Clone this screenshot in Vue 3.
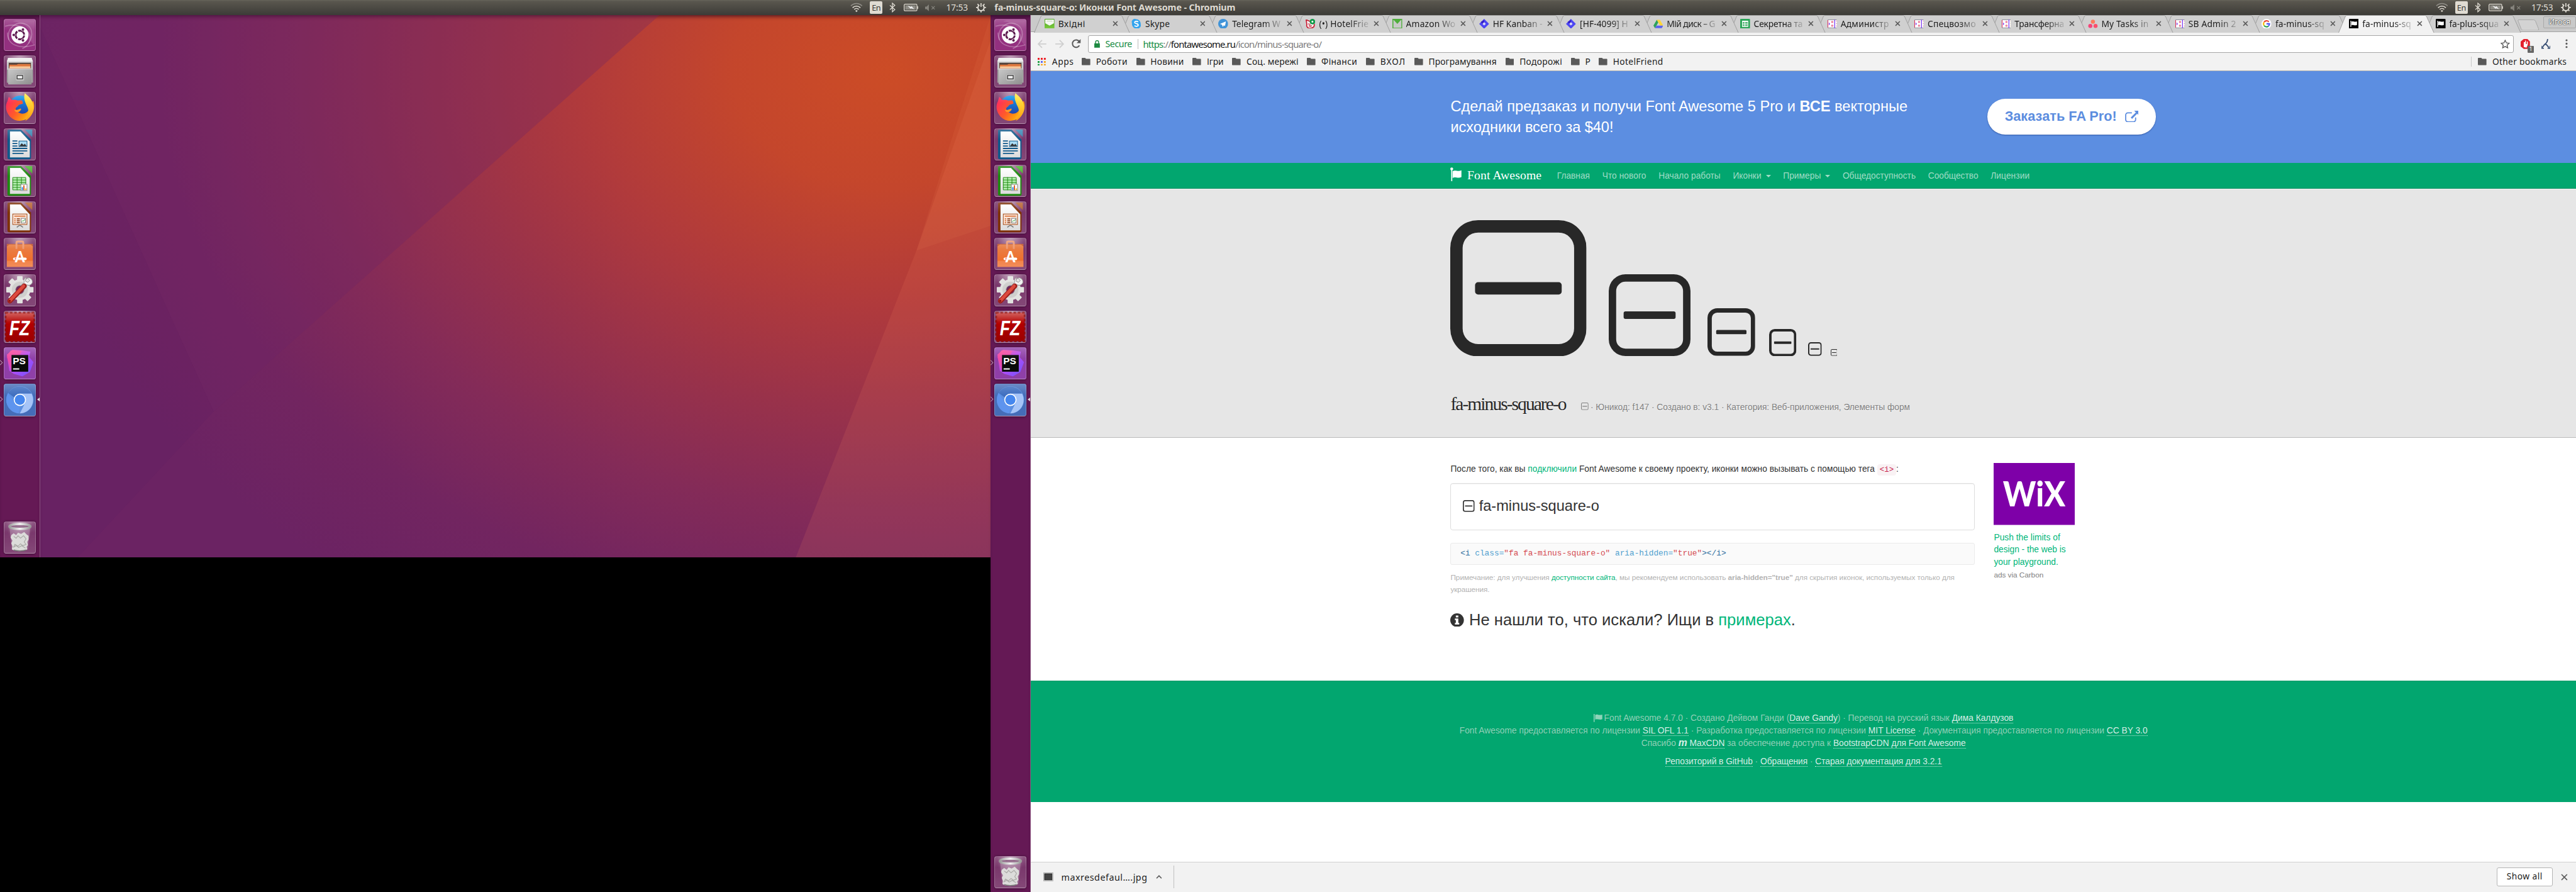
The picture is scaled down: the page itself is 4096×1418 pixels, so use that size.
<script setup>
const fitOne = (el, target) => {
  const root = el.closest('.desk')
  const k = root.getBoundingClientRect().width / 4160
  el.style.letterSpacing = '0px'
  const w = el.getBoundingClientRect().width / k
  const n = el.textContent.length
  el.style.letterSpacing = ((target - w) / n).toFixed(4) + 'px'
}
const vFit = { mounted: (el, b) => requestAnimationFrame(() => fitOne(el, b.value)) }

const launcher = ['ubuntu', 'files', 'firefox', 'writer', 'calc', 'impress', 'software', 'settings', 'filezilla', 'phpstorm', 'chromium']
const marksOn = { software: ['A', 18, 40, 25, 16], filezilla: ['FZ', 9, 40, 34, 33], phpstorm: ['PS', 14.5, 27.5, 15, 21] }
const monitors = [{ id: 'left' }, { id: 'right' }]
const tabs = [
  ['mail', 'Вхідні', 44], ['skype', 'Skype', 40], ['telegram', 'Telegram W', 78], ['hotel', '(•) HotelFrie', 80],
  ['amazon', 'Amazon Wo', 80], ['jira', 'HF Kanban -', 80], ['jira', '[HF-4099] H', 78], ['drive', 'Мій диск – G', 78],
  ['sheets', 'Секретна та', 79], ['hf', 'Администр', 78], ['hf', 'Спецвозмо', 78], ['hf', 'Трансферна', 80],
  ['asana', 'My Tasks in', 76], ['hf', 'SB Admin 2', 77], ['google', 'fa-minus-sq', 79], ['flagbox', 'fa-minus-sq', 79], ['flagbox', 'fa-plus-squa', 80],
]
const bookmarks = [
  ['Роботи', 51], ['Новини', 54], ['Ігри', 27], ['Соц. мережі', 84], ['Фінанси', 58], ['ВХОЛ', 41],
  ['Програмування', 110], ['Подорожі', 69], ['P', 8], ['HotelFriend', 81],
]
const sizes = [[220, 36], [132, 27.3], [77, 22.5], [44, 19.2], [22, 13.7], [11, 0]]
const nav = [['Главная', 53], ['Что нового', 71], ['Начало работы', 100], ['Иконки', 46, 1], ['Примеры', 61, 1], ['Общедоступность', 118], ['Сообщество', 81], ['Лицензии', 63]]
const petals = [0, 45, 90, 135, 180, 225, 270, 315]
</script>

<template>
  <div class="desk">
    <svg class="defs" width="0" height="0">
      <defs>
        <linearGradient id="gFx" x1="0" y1="0.2" x2="1" y2="0.8"><stop offset="0" stop-color="#ff2a5f" /><stop offset=".45" stop-color="#ff5a2a" /><stop offset=".75" stop-color="#ff9a10" /><stop offset="1" stop-color="#ffd83a" /></linearGradient>
        <linearGradient id="gFx2" x1="0" y1="0" x2="0" y2="1"><stop offset="0" stop-color="#fff24a" /><stop offset="1" stop-color="#ff9a10" /></linearGradient>
        <linearGradient id="gGlobe" x1="0" y1="0" x2="0" y2="1"><stop offset="0" stop-color="#14a0f0" /><stop offset="1" stop-color="#25289a" /></linearGradient>
        <linearGradient id="gCab" x1="0" y1="0" x2="1" y2="1"><stop offset="0" stop-color="#c9c9c9" /><stop offset="1" stop-color="#8f8f8f" /></linearGradient>
        <linearGradient id="gPage" x1="0" y1="0" x2="0" y2="1"><stop offset="0" stop-color="#fff" /><stop offset="1" stop-color="#dcdcdc" /></linearGradient>
        <linearGradient id="gBag" x1="0" y1="0" x2="0" y2="1"><stop offset="0" stop-color="#e9824a" /><stop offset=".7" stop-color="#ee6f2d" /><stop offset="1" stop-color="#f08a55" /></linearGradient>
        <linearGradient id="gFz" x1="0" y1="0" x2="0" y2="1"><stop offset="0" stop-color="#c9403c" /><stop offset=".4" stop-color="#b30000" /><stop offset="1" stop-color="#9a0000" /></linearGradient>
        <linearGradient id="gPs" x1="0" y1="0" x2="1" y2="1"><stop offset="0" stop-color="#ff4590" /><stop offset=".5" stop-color="#b44cf5" /><stop offset="1" stop-color="#6a55ff" /></linearGradient>
        <linearGradient id="gRim" x1="0" y1="0" x2="1" y2="0"><stop offset="0" stop-color="#8d8d8d" /><stop offset=".5" stop-color="#f3f3f3" /><stop offset="1" stop-color="#8d8d8d" /></linearGradient>
        <linearGradient id="gMail" x1="0" y1="0" x2="0" y2="1"><stop offset="0" stop-color="#4ca420" /><stop offset="1" stop-color="#7dcc3f" /></linearGradient>
      </defs>

      <symbol id="i-ubuntu" viewBox="0 0 52 52">
        <g fill="none" stroke="#fff" stroke-opacity=".28" stroke-width="1.6">
          <path d="M8 34C4 14 20 4 34 8c12 4 15 18 6 32" /><path d="M2 12c12-4 30-2 38 10 6 10 0 22-10 26" /><path d="M6 22c0 20 18 28 44 20" />
        </g>
        <path d="M14 4C34 6 46 16 42 34L50 44V2H20z" fill="#fff" opacity=".12" />
        <circle cx="26" cy="26" r="14" fill="#fff" />
        <circle cx="26" cy="26" r="7" fill="none" stroke="#5c1a4e" stroke-width="3" stroke-dasharray="13 1.66" stroke-dashoffset="-.8" />
        <g fill="#5c1a4e" stroke="#fff" stroke-width=".8"><circle cx="16.2" cy="26" r="2.5" /><circle cx="31" cy="17.3" r="2.5" /><circle cx="31" cy="34.7" r="2.5" /></g>
      </symbol>
      <symbol id="i-files" viewBox="0 0 52 52">
        <path d="M7 4h38l2 6v34H5V10z" fill="#c9c9c9" /><path d="M7 4h38l2 6H5z" fill="#ededed" />
        <path d="M8 12h36v12H8z" fill="#4a3830" /><path d="M9 15h12l2-1h20v10H9z" fill="#e0763a" /><path d="M9 18h34v2H9z" fill="#ffe2b8" />
        <path d="M5 23h2v21H5zM45 23h2v21h-2z" fill="#9b9b9b" />
        <rect x="7" y="21" width="38" height="26" rx="1" fill="url(#gCab)" /><path d="M8 21.6h36" stroke="#eee" />
        <rect x="19" y="30" width="14" height="11" rx="2" fill="#c6c6c6" stroke="#aaa" /><rect x="21.500" y="32.500" width="9" height="5.500" fill="#eee" stroke="#333" stroke-width="1.300" />
      </symbol>
      <symbol id="i-firefox" viewBox="0 0 52 52">
        <circle cx="27" cy="25" r="19" fill="url(#gGlobe)" />
        <path d="M8 8c2 1 3 3 4 5 4-1 9 0 11 1 3 0 6-1 7 1l1 4-7 2c-1 3-4 3-5 6 2 7 11 11 18 6 4-3 7-9 5-16l6-2c3 10 0 21-8 27-10 7-22 6-30-2C3 32 2 22 6 15z" fill="url(#gFx)" />
        <path d="M34 2c3 3 11 8 13.500 18 2 11-3 22-13 27 5-8 7-17 3-24-3-6-6-13-3.500-21z" fill="url(#gFx2)" />
        <path d="M17 29c3 1 6 0 10-2 2 0 1 3-2 5-4 2-7 0-8-3z" fill="#ff9a2a" />
      </symbol>
      <symbol id="i-writer" viewBox="0 0 52 52">
        <path d="M8 2h20l16 16v29a3 3 0 0 1-3 3H9a3 3 0 0 1-3-3V4a2 2 0 0 1 2-2z" fill="#10598b" /><path d="M34 2h12v12z" fill="#3a87b4" />
        <path d="M10 5h17l15 16v26H10z" fill="url(#gPage)" />
        <path d="M14 20.500h8M14 24.500h8M14 28.500h8M14 32.500h24M14 36.500h24M14 40.500h18" stroke="#10598b" stroke-width="1.800" />
        <rect x="24.500" y="20.500" width="13" height="9" fill="#a9dcf5" stroke="#10598b" /><path d="M25 29l4-5 3 3 2-2 3 4z" fill="#333" />
      </symbol>
      <symbol id="i-calc" viewBox="0 0 52 52">
        <path d="M8 2h20l16 16v29a3 3 0 0 1-3 3H9a3 3 0 0 1-3-3V4a2 2 0 0 1 2-2z" fill="#1e8a10" /><path d="M34 2h12v12z" fill="#47b52c" />
        <path d="M10 5h17l15 16v26H10z" fill="url(#gPage)" />
        <path d="M14.500 20.500h21v20h-21z" fill="#b7efb2" stroke="#1e8a10" /><path d="M14 24.500h22M14 28.500h22M14 32.500h22M14 36.500h22M21.500 20v21M28.500 20v21" stroke="#1e8a10" />
        <rect x="27.500" y="31.500" width="10" height="10" fill="#fff" stroke="#888" /><path d="M29 36h2v5h-2z" fill="#1e90ff" /><path d="M31.500 33h2v8h-2z" fill="#e0602a" /><path d="M34.500 38h2v3h-2z" fill="#f2c022" />
      </symbol>
      <symbol id="i-impress" viewBox="0 0 52 52">
        <path d="M8 2h20l16 16v29a3 3 0 0 1-3 3H9a3 3 0 0 1-3-3V4a2 2 0 0 1 2-2z" fill="#7e3108" /><path d="M34 2h12v12z" fill="#b7622f" />
        <path d="M10 5h17l15 16v26H10z" fill="url(#gPage)" />
        <rect x="14.500" y="20.500" width="23" height="17" fill="#fbe6da" stroke="#a4470f" /><path d="M17 24h18" stroke="#d8743a" stroke-width="2" />
        <path d="M17 28.500h2M17 31.500h2M17 34.500h2" stroke="#d8743a" stroke-width="2" /><path d="M21 28.500h5M21 31.500h5M21 34.500h5" stroke="#7e3108" stroke-width="1.600" />
        <rect x="28" y="27.500" width="7" height="7.500" fill="#fff" stroke="#777" /><path d="M29 33l2-2 1 1 2-3" stroke="#2a9a2a" fill="none" /><path d="M21 42l4-3h2l4 3" stroke="#777" fill="none" stroke-width="1.500" />
      </symbol>
      <symbol id="i-software" viewBox="0 0 52 52">
        <path d="M5 10h42v6H5z" fill="#c65a2c" /><path d="M5 14l4-3h34l4 3v33H5z" fill="url(#gBag)" /><path d="M5 37h42v10H5z" fill="#f4905c" opacity=".6" />
        <path d="M20.500 18V8a2 2 0 0 1 2-2h7a2 2 0 0 1 2 2v10" fill="none" stroke="#ef9a72" stroke-width="3" />
        <path d="M17 34h18" stroke="#fff" stroke-width="4" stroke-linecap="round" /><path d="M18 34h11" stroke="#e4572a" stroke-width="2" />
      </symbol>
      <symbol id="i-settings" viewBox="0 0 52 52">
        <g fill="#e2e2e0"><rect v-for="a in petals" :key="a" x="21.500" y="3" width="9" height="12" rx="1" :transform="`rotate(${a} 26 25)`" /></g>
        <circle cx="26" cy="25" r="17" fill="#e2e2e0" /><circle cx="26" cy="25" r="13" fill="#cfcfcd" /><circle cx="26" cy="25" r="7" fill="#6e2a5c" stroke="#aaa" />
        <path d="M38 6a6.500 6.500 0 0 1 8 8 6.500 6.500 0 0 1-9 3l-5 5-4-4 5-5a7 7 0 0 1 3-8l-1 6 4 2 3-3z" fill="#f1f1f1" stroke="#8a8a8a" />
        <path d="M10 43L33 19" stroke="#9c1f1b" stroke-width="8" stroke-linecap="round" /><path d="M10 42.500L32 19" stroke="#dd4a3e" stroke-width="5" stroke-linecap="round" /><circle cx="9.500" cy="43" r="1.800" fill="#8c1512" />
      </symbol>
      <symbol id="i-filezilla" viewBox="0 0 52 52">
        <rect x="3" y="3" width="46" height="46" fill="url(#gFz)" stroke="#8f0c0c" stroke-width="3" stroke-dasharray="4 3" />
      </symbol>
      <symbol id="i-phpstorm" viewBox="0 0 52 52">
        <rect width="52" height="52" rx="4" fill="#8f3fa8" /><path d="M5 12l9-8 16 1 13 2-2 9 7 8-6 16-12 7-14-4L9 38z" fill="url(#gPs)" /><path d="M5 16l6-11 18 1-10 20-6 14z" fill="#ff4e96" opacity=".6" />
        <rect x="12.500" y="12.500" width="27" height="27" fill="#0a0a0a" />
        <path d="M15 35h10" stroke="#fff" stroke-width="2" />
      </symbol>
      <symbol id="i-chromium" viewBox="0 0 52 52">
        <rect width="52" height="52" rx="4" fill="#456db8" />
        <circle cx="26" cy="26" r="22" fill="#5b8fe0" /><path d="M7 15A22 22 0 0 1 45 16H26a10 10 0 0 0-9 6z" fill="#3f6fc0" />
        <path d="M45 16H26l9 14-9 18A22 22 0 0 0 45 16z" fill="#a6c4f7" /><path d="M7 15l10 16 9 6-2 11A22 22 0 0 1 7 15z" fill="#5e94ee" />
        <circle cx="26" cy="26" r="10" fill="#fff" /><circle cx="26" cy="26" r="8.300" fill="#4587ee" />
      </symbol>
      <symbol id="i-trash" viewBox="0 0 52 52">
        <path d="M9 8l4 36c0 4 26 4 26 0l4-36z" fill="#d9c9d6" opacity=".3" />
        <path d="M12 22l4-3 4 3 3-4 5 2 5-3 4 4 3 2v6l-2 4 1 5-2 3 1 4c-6 4-20 4-25 0l1-5-2-5 2-4-3-5z" fill="#dcdcda" />
        <path d="M16 24l4 3 3-4 4 4 5-4 4 5-3 5 3 4-5 2-4-3-4 4-5-3-2 4M15 42l5-3 4 3 5-3 6 4" fill="none" stroke="#aaa9a6" stroke-width="1.200" />
        <ellipse cx="26" cy="8" rx="17" ry="4" fill="#6b3b62" fill-opacity=".5" stroke="url(#gRim)" stroke-width="3.500" />
        <path d="M16 46c5 2 15 2 20 0" stroke="#777" fill="none" stroke-width="1.500" />
      </symbol>

      <symbol id="t-mail" viewBox="0 0 16 16"><rect width="16" height="16" rx="1" fill="url(#gMail)" /><path d="M1 1h14v6L8 11 1 7z" fill="#f4f8f0" /><path d="M3.500 3.500h9" stroke="#bcd3b0" stroke-width="1" /></symbol>
      <symbol id="t-skype" viewBox="0 0 16 16"><path d="M5 0a5 5 0 0 0-4 7 7.500 7.500 0 0 0 9 8.500A5 5 0 0 0 15 9 7.500 7.500 0 0 0 7.500.6 5 5 0 0 0 5 0z" fill="#31a3ee" /><path d="M11 5C9.500 3.500 5 3.500 5.200 5.800 5.400 8 11 7.200 11 10c0 2.500-4.500 2.500-6 .8" fill="none" stroke="#fff" stroke-width="1.800" /></symbol>
      <symbol id="t-telegram" viewBox="0 0 16 16"><circle cx="8" cy="8" r="8" fill="#3f93d8" /><path d="M12.500 4L3 8l3 1.500L7.500 13 9 10.500l2 1z" fill="#fff" /></symbol>
      <symbol id="t-hotel" viewBox="0 0 16 16"><path d="M1 2c3 0 4 2 7 2s6 2 6 6-3 5-7 5-6-3-5-6z" fill="#fff" stroke="#c61f35" stroke-width="1.800" /><path d="M4 8l4 1M5 11c2 1 4 1 5 0" stroke="#c61f35" stroke-width="1.500" /><circle cx="11" cy="4.500" r="4.500" fill="#129a49" /><circle cx="11" cy="4.500" r="1.500" fill="#fff" /></symbol>
      <symbol id="t-amazon" viewBox="0 0 16 16"><rect x=".8" y=".8" width="14.400" height="14.400" fill="#c9c9c9" stroke="#4fae3c" stroke-width="1.600" /><path d="M1.500 1h13L8 8z" fill="#4fae3c" /></symbol>
      <symbol id="t-jira" viewBox="0 0 16 16"><path d="M8 0l8 8-8 8-8-8z" fill="#4d46f2" /><path d="M8 1.500v4L5.500 8l-3-3z" fill="#3420c8" /><path d="M8 5.300L10.700 8 8 10.700 5.300 8z" fill="#dcdcf5" /></symbol>
      <symbol id="t-drive" viewBox="0 0 16 16"><path d="M5.500 1.500L0 11l2.600 4L8 5.500z" fill="#2fa35c" /><path d="M5.500 1.500h5L16 11h-5z" fill="#ffd43a" /><path d="M5 11h11l-2.500 4h-11z" fill="#5a63f0" /></symbol>
      <symbol id="t-sheets" viewBox="0 0 16 16"><rect width="16" height="16" rx="1" fill="#2ba557" /><rect x="3" y="3" width="10" height="10" fill="#fff" /><path d="M4 5h3v1.500H4zM8 5h4v1.500H8zM4 7.500h3V9H4zM8 7.500h4V9H8zM4 10h3v1.500H4zM8 10h4v1.500H8z" fill="#2ba557" /></symbol>
      <symbol id="t-hf" viewBox="0 0 16 16"><path d="M16 1.500H1.500v13H16" fill="#fff" stroke="#8a8f99" /><path d="M1.500 2v12" stroke="#e0305a" /><path d="M3 5.500L5 8l-2 2.500z" fill="#7a3cf0" /><path d="M12.500 1v14" stroke="#7a3cf0" stroke-width="1.300" /><path d="M7.500 4h2v2h-2zM7.500 10h2v2h-2z" fill="none" stroke="#e0305a" stroke-width=".8" /><path d="M15.500 3v1M15.500 7v1M15.500 11v1" stroke="#e0305a" /></symbol>
      <symbol id="t-asana" viewBox="0 0 16 16"><circle cx="8" cy="4.500" r="3.300" fill="#fc7a5c" /><circle cx="3.800" cy="11.500" r="3.300" fill="#f5457a" /><circle cx="12.200" cy="11.500" r="3.300" fill="#fa4f6c" /></symbol>
      <symbol id="t-google" viewBox="0 0 16 16"><circle cx="8" cy="8" r="8" fill="#fff" /><path d="M11.700 4.800A4.800 4.800 0 0 0 4 5.400" stroke="#ea4335" fill="none" stroke-width="2.100" /><path d="M4 5.400a4.800 4.800 0 0 0 0 5.200" stroke="#fbbc05" fill="none" stroke-width="2.100" /><path d="M4 10.600a4.800 4.800 0 0 0 7 1.200" stroke="#34a853" fill="none" stroke-width="2.100" /><path d="M11 11.800A4.800 4.800 0 0 0 12.800 8H8" stroke="#4a55f5" fill="none" stroke-width="2.100" /></symbol>
      <symbol id="t-flagbox" viewBox="0 0 16 16"><rect width="16" height="16" rx="1.500" fill="#000" /><path d="M3 3v10" stroke="#fff" stroke-width="1.300" /><path d="M4 4.500c3-1.500 4 1 9-.5v6c-5 1.500-6-1-9 .5z" fill="#fff" /></symbol>
      <symbol id="fa-minus" viewBox="0 0 1408 1408"><path fill-rule="evenodd" d="M288 0H1120A288 288 0 0 1 1408 288V1120A288 288 0 0 1 1120 1408H288A288 288 0 0 1 0 1120V288A288 288 0 0 1 288 0zM288 128A160 160 0 0 0 128 288V1120A160 160 0 0 0 288 1280H1120A160 160 0 0 0 1280 1120V288A160 160 0 0 0 1120 128zM288 640H1120A32 32 0 0 1 1152 672V736A32 32 0 0 1 1120 768H288A32 32 0 0 1 256 736V672A32 32 0 0 1 288 640z" /></symbol>
      <symbol id="fa-flag" viewBox="0 0 20 24"><circle cx="2.500" cy="2.500" r="2.400" /><path d="M1.600 3h1.800v20.500H1.600z" /><path d="M4 6.500c5-3 8 1.500 15-1.500v11.500c-7 3-10-1.500-15 1.500z" /></symbol>
      <symbol id="folder" viewBox="0 0 14 12"><path d="M1 0h4.500L7 1.500h6a1 1 0 0 1 1 1V11a1 1 0 0 1-1 1H1a1 1 0 0 1-1-1V1a1 1 0 0 1 1-1z" fill="#595959" /></symbol>
    </svg>

    <header class="panel">
      <div v-for="m in monitors" :key="m.id" class="half" :class="m.id">
        <span v-if="m.id === 'right'" v-fit="389" class="win-title">fa-minus-square-o: Иконки Font Awesome - Chromium</span>
        <div class="tray">
          <svg class="wifi" width="20" height="16" viewBox="0 0 20 16" fill="none" stroke="#dfdbd2" stroke-width="1.600"><path d="M1 5.500a12.500 12.500 0 0 1 18 0" stroke="#8c8a83" /><path d="M3.700 8.500a9 9 0 0 1 12.600 0M6.300 11.200a5.300 5.300 0 0 1 7.400 0" /><path d="M8 13.300a3 3 0 0 1 4 0L10 15.500z" fill="#dfdbd2" stroke="none" /></svg>
          <span class="lang">En</span>
          <svg class="bt" width="10" height="16" viewBox="0 0 10 16" fill="none" stroke="#dfdbd2" stroke-width="1.300"><path d="M1 4.500l8 7L5 15V1l4 3.500-8 7" /></svg>
          <svg class="bat" width="24" height="12" viewBox="0 0 24 12"><rect x=".7" y=".7" width="20.600" height="10.600" rx="1.500" fill="none" stroke="#dfdbd2" stroke-width="1.300" /><rect x="2.500" y="2.500" width="17" height="7" fill="#8d8b84" /><path d="M22.500 4v4" stroke="#dfdbd2" stroke-width="1.500" /><path d="M6 3l6 2 .5-1.500L17 9l-5-2-.5 1.500z" fill="#eee" /></svg>
          <svg class="mute" width="18" height="11" viewBox="0 0 18 11"><path d="M0 3.500h2.500L6 0v11L2.500 7.500H0z" fill="#85837c" /><path d="M10.500 3l5 5M15.500 3l-5 5" stroke="#85837c" stroke-width="1.300" /></svg>
          <span v-fit="35" class="clock">17:53</span>
          <svg class="gear" width="16" height="16" viewBox="0 0 16 16" fill="none" stroke="#dfdbd2"><path d="M5.300 4a5 5 0 1 0 5.400 0" stroke-width="2" /><path d="M8 1v6" stroke-width="1.800" /><path d="M0 8h2.500M13.500 8H16M8 13.500V16M2.300 13.700l1.600-1.600M13.700 13.700l-1.600-1.600M2.300 2.300l1.600 1.600M13.700 2.300l-1.600 1.600" stroke-width="1.800" /></svg>
        </div>
      </div>
    </header>

    <div class="screens">
      <section v-for="m in monitors" :key="m.id" :class="m.id === 'left' ? 'first' : 'second'">
        <nav class="launcher">
          <div v-for="n in launcher" :key="n" class="tile" :class="n">
            <svg width="52" height="52" viewBox="0 0 52 52"><use :href="'#i-' + n" /><text v-if="marksOn[n]" :class="'g-' + n" :x="marksOn[n][1]" :y="marksOn[n][2]" :font-size="marksOn[n][3]" :textLength="marksOn[n][4]" lengthAdjust="spacingAndGlyphs">{{ marksOn[n][0] }}</text></svg>
            <i v-if="n === 'phpstorm' || n === 'chromium'" class="run" /><i v-if="n === 'chromium'" class="focus" />
          </div>
          <div class="tile bin"><svg width="52" height="52"><use href="#i-trash" /></svg></div>
        </nav>

        <div v-if="m.id === 'left'" class="wall">
          <svg width="1535" height="876" viewBox="0 0 1535 876">
            <path d="M0 20L280 640 60 876H0z" fill="#5e1c66" opacity=".2" />
            <path d="M280 640L1000 0H0V20z" fill="#6e2468" opacity=".3" />
            <path d="M1535 40L1415 380 1220 876H1535z" fill="#ff8a60" opacity=".12" />
            <path d="M1415 380L1535 340V0z" fill="#ff9a60" opacity=".08" />
          </svg>
        </div>

        <div v-else class="browser">
          <div class="strip">
            <div v-for="(t, i) in tabs" :key="i" class="tab" :class="{ on: i === 15 }" :style="{ zIndex: i === 15 ? 40 : 30 - i }">
              <svg class="shape" width="156" height="29" viewBox="0 0 156 29"><path d="M.5 28.500L11.500 2Q12.300.5 14 .5H140Q141.700.5 142.500 2L154.500 28.500" /></svg>
              <svg class="fav" width="16" height="16"><use :href="'#t-' + t[0]" /></svg>
              <span class="ttl"><span v-fit="t[2]">{{ t[1] }}</span></span>
              <svg class="x" width="9" height="9" viewBox="0 0 9 9"><path d="M1 1l7 7M8 1L1 8" stroke="#5a5a5a" stroke-width="1.600" /></svg>
            </div>
            <svg class="newtab" width="36" height="18" viewBox="0 0 36 18"><path d="M2 .5H26Q28 .5 29 2.500L34 15Q35 17.500 32.500 17.500H9Q7 17.500 6 15.500L1 2.500Q.3.500 2 .5z" fill="#d3d3d3" stroke="#a6a6a6" /></svg>
            <span class="user"><span v-fit="35">Игося</span></span>
          </div>

          <div class="toolbar">
            <svg class="arr" width="16" height="14" viewBox="0 0 16 14" fill="none" stroke="#cfcfcf" stroke-width="1.800"><path d="M15 7H2M8 1L2 7l6 6" /></svg>
            <svg class="arr" width="16" height="14" viewBox="0 0 16 14" fill="none" stroke="#cfcfcf" stroke-width="1.800"><path d="M1 7h13M8 1l6 6-6 6" /></svg>
            <svg class="rel" width="15" height="15" viewBox="0 0 15 15"><path d="M12.500 10.500a6 6 0 1 1-.3-6.500" fill="none" stroke="#5a5a5a" stroke-width="2" /><path d="M14.500 0v6.500H8z" fill="#5a5a5a" /></svg>
            <div class="omni">
              <svg class="lock" width="9" height="12" viewBox="0 0 9 12"><rect y="5" width="9" height="7" fill="#1d8a41" /><path d="M2 5V3a2.500 2.500 0 0 1 5 0v2" fill="none" stroke="#1d8a41" stroke-width="1.400" /></svg>
              <span v-fit="43" class="sec">Secure</span><i class="bar" />
              <span v-fit="288" class="url"><em>https</em>://<b>fontawesome.ru</b>/icon/minus-square-o/</span>
              <svg class="star" width="15" height="14" viewBox="0 0 15 14"><path d="M7.500 1l2 4.300 4.500.5-3.400 3 1 4.500-4.100-2.300-4.100 2.300 1-4.500L1 5.800l4.500-.5z" fill="none" stroke="#5a5a5a" stroke-width="1.400" /></svg>
            </div>
            <div class="ext adb"><svg width="16" height="16" viewBox="0 0 16 16"><path d="M5 0h6l4 4v8l-4 4H5L0 12V4z" fill="#e3202c" /><path d="M5 13V5h2V2.500h1.500V8H10V4h1.500v5l-2 5z" fill="#fff" /></svg><span>1</span></div>
            <svg class="ext2" width="14" height="16" viewBox="0 0 14 16" fill="none" stroke="#31486e" stroke-width="1.800"><path d="M10 0C10 5 8 7 5 9l-4 5M6 8c3 1 4 3 6 6" /><path d="M0 11v4h4M14 11v4h-4" stroke-width="1.500" /></svg>
            <svg class="dots" width="4" height="15" viewBox="0 0 4 15" fill="#5a5a5a"><circle cx="2" cy="2" r="1.600" /><circle cx="2" cy="7.500" r="1.600" /><circle cx="2" cy="13" r="1.600" /></svg>
          </div>

          <div class="marks">
            <svg class="apps" width="13" height="13" viewBox="0 0 13 13"><path d="M0 0h3v3H0zM5 0h3v3H5zM10 0h3v3h-3z" fill="#ed1c24" /><path d="M0 5h3v3H0zM0 10h3v3H0z" fill="#24a04a" /><path d="M5 5h3v3H5z" fill="#5a63f0" /><path d="M10 5h3v3h-3zM5 10h3v3H5zM10 10h3v3h-3z" fill="#f5a623" /></svg>
            <span class="apptext"><span v-fit="35">Apps</span></span>
            <div v-for="b in bookmarks" :key="b[0]" class="mk"><svg width="14" height="12"><use href="#folder" /></svg><span v-fit="b[1]">{{ b[0] }}</span></div>
            <div class="other"><svg width="14" height="12"><use href="#folder" /></svg><span v-fit="120">Other bookmarks</span></div>
          </div>

          <main class="page">
            <div class="promo"><div class="wrap">
              <p><span v-fit="738">Сделай предзаказ и получи Font Awesome 5 Pro и <b>ВСЕ</b> векторные</span><br><span v-fit="263">исходники всего за $40!</span></p>
              <a class="cta"><span v-fit="181">Заказать FA Pro!</span><svg width="22" height="19" viewBox="0 0 22 19"><path d="M11 3.500H4.500A3.500 3.500 0 0 0 1 7v7.500A3.500 3.500 0 0 0 4.500 18h9a3.500 3.500 0 0 0 3.500-3.500V11" fill="none" stroke="#5c8ddf" stroke-width="1.800" /><path d="M14 0h8v8l-2.700-2.700-9 9-2.300-2.300 9-9z" fill="#5c8ddf" transform="translate(1.800 0) scale(.92)" /></svg></a>
            </div></div>
            <div class="topnav"><div class="wrap">
              <span class="brand"><svg width="19" height="23"><use href="#fa-flag" /></svg><span v-fit="120">Font Awesome</span></span>
              <a v-for="n in nav" :key="n[0]"><span v-fit="n[1]">{{ n[0] }}</span><i v-if="n[2]" class="caret" /></a>
            </div></div>
            <div class="hero"><div class="wrap">
              <div class="icons"><svg v-for="s in sizes" :key="s[0]" :width="s[0]" :height="s[0]" :style="{ marginRight: s[1] + 'px' }"><use href="#fa-minus" /></svg></div>
              <h1><span v-fit="186">fa-minus-square-o</span><small><svg width="12" height="12"><use href="#fa-minus" /></svg><span v-fit="516">· Юникод: f147 · Создано в: v3.1 · Категория: Веб-приложения, Элементы форм</span></small></h1>
            </div></div>
            <div class="body"><div class="wrap">
              <div class="col">
                <p class="lead"><span v-fit="689" class="nw">После того, как вы <a>подключили</a> Font Awesome к своему проекту, иконки можно вызывать с помощью тега&nbsp;</span><code>&lt;i&gt;</code>:</p>
                <div class="well"><svg width="19" height="19"><use href="#fa-minus" /></svg><span v-fit="194">fa-minus-square-o</span></div>
                <pre><span v-fit="429"><b>&lt;i</b> <i>class=</i><u>"fa fa-minus-square-o"</u> <i>aria-hidden=</i><u>"true"</u><b>&gt;&lt;/i&gt;</b></span></pre>
                <p class="note"><span v-fit="814">Примечание: для улучшения <a>доступности сайта</a>, мы рекомендуем использовать <b>aria-hidden="true"</b> для скрытия иконок, используемых только для</span><br><span v-fit="63">украшения.</span></p>
                <h3><svg width="22" height="22" viewBox="0 0 22 22"><circle cx="11" cy="11" r="11" fill="#333" /><path d="M9 3.500h4v3H9zM7.500 8.500H13v7h1.500V18h-7v-2.500H9V11H7.500z" fill="#fff" /></svg><span v-fit="527">Не нашли то, что искали? Ищи в <a>примерах</a>.</span></h3>
              </div>
              <aside>
                <svg width="131" height="100" viewBox="0 0 131 100"><rect width="131" height="100" fill="#7e00a8" /><text x="15" y="70" font-family="Lato, sans-serif" font-weight="900" font-size="56" fill="#fff" textLength="101" lengthAdjust="spacingAndGlyphs">WiX</text></svg>
                <a><span v-fit="107">Push the limits of</span><br><span v-fit="116">design - the web is</span><br><span v-fit="104">your playground.</span></a>
                <small v-fit="80">ads via Carbon</small>
              </aside>
            </div></div>
            <footer>
              <p><svg class="ff" width="14" height="13" viewBox="0 0 14 13"><path d="M0 0h1.500v13H0zM2.500 1.500c4-2 6 1.500 11.500-.5v7.500c-5.500 2-7.500-1.500-11.500.5z" /></svg><span v-fit="661">Font Awesome 4.7.0 · Создано Дейвом Ганди (<a>Dave Gandy</a>) · Перевод на русский язык <a>Дима Калдузов</a></span></p>
              <p><span v-fit="1111">Font Awesome предоставляется по лицензии <a>SIL OFL 1.1</a> · Разработка предоставляется по лицензии <a>MIT License</a> · Документация предоставляется по лицензии <a>CC BY 3.0</a></span></p>
              <p><span v-fit="524">Спасибо <a><b class="mx">m</b> MaxCDN</a> за обеспечение доступа к <a>BootstrapCDN для Font Awesome</a></span></p>
              <p class="last"><span v-fit="447"><a>Репозиторий в GitHub</a> · <a>Обращения</a> · <a>Старая документация для 3.2.1</a></span></p>
            </footer>
            <div class="fill" />
          </main>

          <div class="shelf">
            <svg width="16" height="14" viewBox="0 0 16 14"><rect x=".5" y=".5" width="15" height="13" fill="#fff" stroke="#aaa" /><rect x="2" y="2" width="12" height="10" fill="#444" stroke="#222" /></svg>
            <span class="dl"><span v-fit="139">maxresdefaul….jpg</span></span>
            <svg class="chev" width="10" height="6" viewBox="0 0 10 6"><path d="M1 5.300l4-4 4 4" fill="none" stroke="#5a5a5a" stroke-width="1.700" /></svg>
            <i class="vsep" />
            <span class="showall"><span v-fit="58">Show all</span></span>
            <svg class="cls" width="11" height="11" viewBox="0 0 11 11"><path d="M1 1l9 9M10 1l-9 9" stroke="#5a5a5a" stroke-width="1.700" /></svg>
          </div>
        </div>
      </section>
    </div>
  </div>
</template>

<style>
body { background: #000; overflow: hidden; }
</style>
<style scoped>
.desk { zoom: 0.984615; width: 4160px; height: 1440px; background: #000; overflow: hidden; font-family: "Noto Sans", sans-serif; font-size: 14px; }
.desk *, .desk { box-sizing: border-box; }
.desk span { white-space: nowrap; }
.desk svg { display: block; flex: none; }
.defs { position: absolute; }
.panel { display: flex; height: 24px; background: linear-gradient(#66645a, #59564e 10%, #3c3b37); color: #dfdbd2; position: relative; z-index: 50; }
.half { width: 1600px; display: flex; align-items: center; position: relative; }
.half.right { width: 2560px; }
.win-title { margin: -1px 0 0 6px; font-weight: 700; font-size: 14.500px; line-height: 24px; }
.tray { margin-left: auto; display: flex; align-items: center; height: 24px; padding-right: 8px; }
.lang { margin-left: 12px; width: 20px; height: 20px; border-radius: 2px; background: #dfdbd2; color: #3c3b37; font-size: 13px; line-height: 21px; text-align: center; letter-spacing: -.5px; }
.bt { margin-left: 11px; }
.bat { margin-left: 13px; }
.mute { margin: 1px 0 0 11px; }
.clock { margin-left: 16px; font-size: 14px; line-height: 24px; }
.gear { margin-left: 13px; }
.screens { display: flex; height: 1416px; }
.first { width: 1600px; height: 876px; display: flex; }
.launcher { width: 65px; flex: none; background: #651955; border-right: 1px solid #8d5481; display: flex; flex-direction: column; gap: 7px; padding: 6px; box-shadow: inset 0 6px 6px -4px rgba(30, 0, 25, .7); }
.tile { width: 52px; height: 52px; border-radius: 4px; position: relative; background: radial-gradient(ellipse at 50% -10%, rgba(255, 255, 255, .5), rgba(255, 255, 255, .08) 60%), linear-gradient(rgba(255, 255, 255, .02), rgba(255, 255, 255, .14)); box-shadow: 0 1px 4px rgba(20, 0, 20, .45); }
.tile::after { content: ""; position: absolute; inset: 0; border-radius: 4px; border: 1px solid rgba(255, 255, 255, .24); background: linear-gradient(rgba(255, 255, 255, .2), rgba(255, 255, 255, 0) 35%); }
.tile text { fill: #fff; font-family: "Liberation Sans", sans-serif; font-weight: 700; }
.tile .g-software { font-family: Lato, sans-serif; font-weight: 900; }
.tile .g-filezilla { font-style: italic; }
.ubuntu { background: #93307f; }
.bin { margin-top: auto; }
.run { position: absolute; left: -8px; top: 21px; width: 7px; height: 7px; border: solid #c9b3c5; border-width: 1.500px 1.500px 0 0; transform: rotate(45deg) scale(.8); margin-left: -1px; }
.focus { position: absolute; right: -6px; top: 22px; border: 4px solid transparent; border-right: 5px solid #ddd; border-left: 0; }
.wall { width: 1535px; height: 876px; background: radial-gradient(ellipse 1400px 1050px at 1370px 90px, #cc4c26 0, #c4462c 18%, #b03a3c 36%, #99324a 52%, #842b58 68%, #722560 84%, #6b2363 100%); box-shadow: inset 0 6px 6px -4px rgba(30, 0, 25, .7); }
.second { width: 2560px; display: flex; }
.browser { width: 2495px; display: flex; flex-direction: column; background: #fff; }
.strip { height: 28px; display: flex; background: #cacaca; border-bottom: 1px solid #a3a3a3; padding-left: 5px; position: relative; }
.tab { width: 140.400px; flex: none; position: relative; display: flex; align-items: center; padding-left: 17px; height: 28px; }
.shape { position: absolute; left: 0; top: 0; }
.shape path { fill: #d0d0d0; stroke: #9e9e9e; }
.on .shape path { fill: #f2f2f2; }
.fav, .ttl, .x { position: relative; }
.ttl { margin-left: 6px; width: 82px; overflow: hidden; line-height: 28px; color: #1b1b1b; mask-image: linear-gradient(90deg, #000 62%, rgba(0, 0, 0, .1)); }
.tab:nth-child(-n+2) .ttl { mask-image: none; }
.x { margin-left: 6px; margin-top: 1px; }
.newtab { margin: 7px 0 0 9px; position: relative; z-index: 41; }
.user { position: absolute; right: 0; top: 2px; width: 53px; height: 20px; background: #c9c9c9; border: 1px solid #a9a9a9; border-radius: 2px; text-align: center; line-height: 17px; font-size: 12.500px; color: #fff; text-shadow: 0 0 1px #333, 0 0 1px #333, 0 0 2px #555; }
.toolbar { height: 33px; background: #f2f2f2; display: flex; align-items: flex-start; padding: 5px 0 0 10px; flex: none; }
.arr { margin: 7px 12px 0 0; }
.rel { margin: 6px 11px 0 0; }
.omni { width: 2303px; height: 28px; background: #fff; border: 1px solid #a6a6a6; border-radius: 3px; display: flex; align-items: center; padding-left: 9px; font-size: 15px; }
.sec { color: #158b42; margin-left: 9px; font-size: 14.500px; }
.bar { width: 1px; height: 16px; background: #bbb; margin: 0 8px 0 9px; }
.url { color: #7d7d7d; }
.url em { font-style: normal; color: #158b42; }
.url b { font-weight: 400; color: #111; }
.star { margin: 0 6px 0 auto; }
.adb { position: relative; margin: 6px 0 0 11px; }
.adb span { position: absolute; left: 11px; top: 11px; width: 10px; height: 11px; background: #666; color: #fff; font-size: 9px; line-height: 11px; text-align: center; border-radius: 1px; }
.ext2 { margin: 6px 0 0 17px; }
.dots { margin: 6px 0 0 25px; }
.marks { height: 30px; flex: none; background: #f2f2f2; border-bottom: 1px solid #b6b4b1; display: flex; align-items: center; padding-left: 11px; color: #1b1b1b; }
.apptext { margin: 0 13px 0 10px; width: 35px; }
.mk, .other { display: flex; align-items: center; gap: 9px; margin-right: 14px; }
.other { margin: 0 15px 0 auto; border-left: 1px solid #c9c9c9; padding-left: 11px; height: 16px; }
.page { flex: 1; display: flex; flex-direction: column; font-family: "Liberation Sans", Arial, sans-serif; font-size: 14px; line-height: 20px; color: #333; min-height: 0; }
.page p, .page h1, .page h3, .page pre { margin: 0; font-weight: 400; }
.wrap { width: 1140px; margin: 0 auto; display: flex; }
.page span { display: inline-block; }
.promo { height: 148px; background: #5c8ee1; color: #fff; flex: none; }
.promo p { width: 867px; margin-top: 40px; font-size: 24px; line-height: 34px; }
.cta { margin-top: 44px; width: 272px; height: 58px; border-radius: 29px; background: #fff; color: #5c8ddf; font-weight: 700; font-size: 22px; display: flex; align-items: center; padding-left: 28px; gap: 13px; box-shadow: 0 1px 2px rgba(20, 50, 120, .55); }
.topnav { height: 42px; background: #02a66f; border-bottom: 1px solid #078e61; flex: none; color: #a0dcc6; }
.brand { display: flex !important; align-items: flex-start; color: #fff; font-family: "Liberation Serif", serif; font-size: 20px; padding-top: 7px; width: 152px; gap: 8px; margin-right: 10px; line-height: 24px; }
.brand svg { fill: #fff; }
.brand span { padding-top: 1px; }
.topnav a { padding: 11px 10px 0; display: flex; }
.caret { margin: 8px 0 0 7px; border: 4.500px solid transparent; border-top: 5px solid #a0dcc6; border-bottom: 0; width: 0; height: 0; }
.hero { height: 402px; background: #e6e6e6; border-bottom: 1px solid #bbb; border-top: 1px solid #f3f3f3; flex: none; }
.hero .wrap { flex-direction: column; }
.icons { display: flex; align-items: flex-end; padding-top: 49px; fill: #282828; filter: drop-shadow(0 1px 0 #fff); }
h1 { display: flex; align-items: baseline; font-family: "Liberation Serif", serif; font-size: 30px; line-height: 36px; padding-top: 60px; color: #282828; text-shadow: 0 1px 0 #fff; }
h1 small { font-family: "Liberation Sans", sans-serif; font-size: 14px; color: #808080; display: flex; align-items: baseline; gap: 3px; margin-left: 25px; fill: #808080; }
.body { flex: none; height: 392px; background: #fff; }
.col { width: 847px; padding-top: 41px; }
.col a, aside a { color: #00b67a; }
code { font: 12.600px/18px "Liberation Mono", monospace; background: #f9f2f4; color: #c7254e; padding: 2px 4px; border-radius: 4px; }
.well { margin-top: 11px; height: 76px; border: 1px solid #ddd; border-radius: 4px; display: flex; align-items: center; padding: 0 0 2px 19px; gap: 7px; font-size: 24px; fill: #333; box-shadow: inset 0 1px 1px rgba(0, 0, 0, .04); }
pre { margin-top: 20px !important; height: 36px; background: #fafafa; border: 1px solid #ebebeb; border-radius: 3px; padding-left: 15px; font: 13px/32px "Liberation Mono", monospace; }
pre b { font-weight: 400; color: #2f6f9f; }
pre i { font-style: normal; color: #4f9fcf; }
pre u { text-decoration: none; color: #d44950; }
.note { font-size: 12px; color: #b3b3b3; padding-top: 11px; }
h3 { display: flex; align-items: center; gap: 8px; font-size: 26px; line-height: 30px; padding-top: 23px; }
aside { margin: 41px 0 0 30.500px; width: 140px; }
aside a { display: block; margin-top: 10px; }
aside small { display: inline-block; font-size: 12px; color: #808080; line-height: 18px; }
footer { height: 196px; flex: none; background: #02a66f; border-top: 1px solid #0b9b69; padding-top: 50px; text-align: center; color: #8ed4b9; text-shadow: 0 1px 0 rgba(0, 0, 0, .12); }
footer p { display: flex; justify-content: center; height: 20px; }
footer a { color: #d6f1e7; border-bottom: 1px dotted #bfe8d9; }
footer .ff { fill: #8ed4b9; margin: 3px 3px 0 0; }
.last { margin-top: 10px !important; }
.mx { font-style: italic; font-weight: 900; font-size: 16px; line-height: 10px; }
.fill { flex: 1; background: #fff; }
.shelf { height: 49px; flex: none; background: #f2f2f2; border-top: 1px solid #cfcfcf; display: flex; align-items: center; padding-left: 20px; color: #1b1b1b; }
.dl { margin-left: 13px; width: 140px; font-size: 14.500px; }
.chev { margin-left: 13px; }
.vsep { width: 1px; height: 36px; background: #c0c0c0; margin-left: 18px; }
.showall { margin-left: auto; width: 90px; height: 30px; border: 1px solid #b5b5b5; border-radius: 3px; background: #fff; text-align: center; line-height: 27px; }
.cls { margin: 0 13px 0 14px; }
</style>
